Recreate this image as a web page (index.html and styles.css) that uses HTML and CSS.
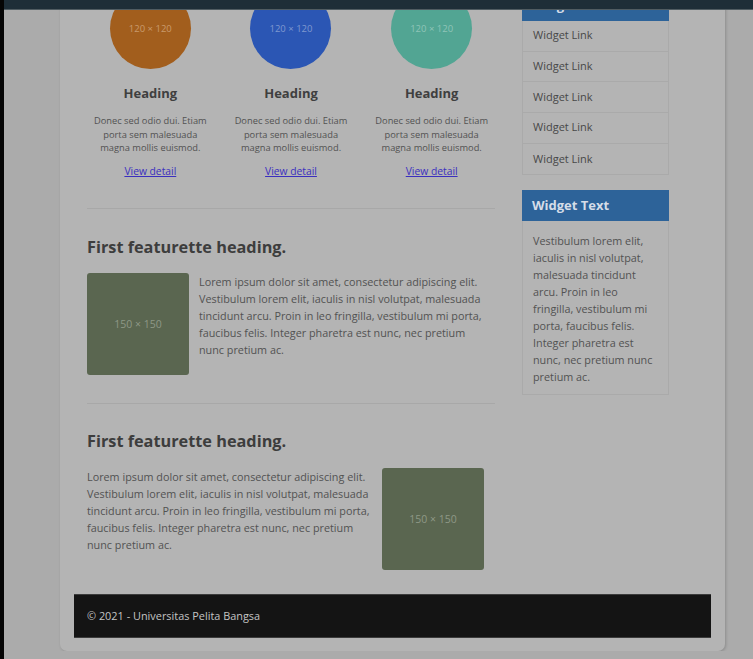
FILE: index.html
```html
<!DOCTYPE html>
<html lang="id">
<head>
<meta charset="utf-8">
<title>Universitas Pelita Bangsa</title>
<link rel="stylesheet" href="styles.css">
</head>
<body>
<div class="edge"></div>
<div class="topbar"></div>
<div class="page">
  <div class="card">
    <div class="content">
      <main class="main">
        <div class="cols">
          <div class="col">
            <div class="circle c-orange">120 × 120</div>
            <h3 class="col-title">Heading</h3>
            <p class="col-text">Donec sed odio dui. Etiam porta sem malesuada magna mollis euismod.</p>
            <a class="col-link" href="#">View detail</a>
          </div>
          <div class="col">
            <div class="circle c-blue">120 × 120</div>
            <h3 class="col-title">Heading</h3>
            <p class="col-text">Donec sed odio dui. Etiam porta sem malesuada magna mollis euismod.</p>
            <a class="col-link" href="#">View detail</a>
          </div>
          <div class="col">
            <div class="circle c-teal">120 × 120</div>
            <h3 class="col-title">Heading</h3>
            <p class="col-text">Donec sed odio dui. Etiam porta sem malesuada magna mollis euismod.</p>
            <a class="col-link" href="#">View detail</a>
          </div>
        </div>
        <hr class="rule rule-first">
        <section class="feat">
          <h2 class="feat-title">First featurette heading.</h2>
          <div class="feat-row">
            <div class="thumb">150 × 150</div>
            <p class="feat-text feat-text-right">Lorem ipsum dolor sit amet, consectetur adipiscing elit. Vestibulum lorem elit, iaculis in nisl volutpat, malesuada tincidunt arcu. Proin in leo fringilla, vestibulum mi porta, faucibus felis. Integer pharetra est nunc, nec pretium nunc pretium ac.</p>
          </div>
        </section>
        <hr class="rule">
        <section class="feat">
          <h2 class="feat-title">First featurette heading.</h2>
          <div class="feat-row feat-row-rev">
            <p class="feat-text feat-text-left">Lorem ipsum dolor sit amet, consectetur adipiscing elit. Vestibulum lorem elit, iaculis in nisl volutpat, malesuada tincidunt arcu. Proin in leo fringilla, vestibulum mi porta, faucibus felis. Integer pharetra est nunc, nec pretium nunc pretium ac.</p>
            <div class="thumb">150 × 150</div>
          </div>
        </section>
      </main>
      <aside class="sidebar">
        <div class="widget">
          <div class="widget-head">Widget Sidebar</div>
          <ul class="widget-list">
            <li><a href="#">Widget Link</a></li>
            <li><a href="#">Widget Link</a></li>
            <li><a href="#">Widget Link</a></li>
            <li><a href="#">Widget Link</a></li>
            <li><a href="#">Widget Link</a></li>
          </ul>
        </div>
        <div class="widget widget-second">
          <div class="widget-head">Widget Text</div>
          <p class="widget-body">Vestibulum lorem elit, iaculis in nisl volutpat, malesuada tincidunt arcu. Proin in leo fringilla, vestibulum mi porta, faucibus felis. Integer pharetra est nunc, nec pretium nunc pretium ac.</p>
        </div>
      </aside>
    </div>
    <footer class="footer">© 2021 - Universitas Pelita Bangsa</footer>
  </div>
</div>
</body>
</html>
```

FILE: styles.css
```css
* { box-sizing: border-box; }

html, body {
  margin: 0;
  padding: 0;
  background: #ababab;
  font-family: "Open Sans", "Noto Sans", "DejaVu Sans", sans-serif;
  color: #555555;
  overflow: hidden;
}

.edge {
  position: fixed;
  left: 0;
  top: 0;
  width: 4px;
  height: 100%;
  background: #050505;
  z-index: 5;
}

.topbar {
  position: fixed;
  left: 0;
  top: 0;
  width: 100%;
  height: 10px;
  background: #1e2e38;
  border-bottom: 1px solid #505c62;
  z-index: 4;
}

.page {
  padding: 0 28px 0 60px;
}

.card {
  width: 665px;
  margin-top: -40px;
  padding: 28px 14px 13px;
  background: #b4b4b4;
  border-radius: 0 0 7px 7px;
  box-shadow: 1px 1px 3px rgba(0, 0, 0, 0.18);
}

.content {
  display: flex;
  align-items: flex-start;
  padding: 0 0 0 13px;
}

.main {
  width: 408px;
  flex: none;
}

.cols {
  display: grid;
  grid-template-columns: repeat(3, 1fr);
  margin: 0 -7px;
}

.col {
  text-align: center;
}

.circle {
  width: 81px;
  height: 81px;
  margin: 0 auto;
  border-radius: 50%;
  display: flex;
  align-items: center;
  justify-content: center;
  font-size: 9.5px;
}

.c-orange { background: #a25e1d; color: #c99a6c; }
.c-blue { background: #2b56b4; color: #7f98cf; }
.c-teal { background: #52a593; color: #8fc4b7; }

.col-title {
  margin: 15px 0 0;
  font-size: 13px;
  line-height: 18px;
  font-weight: 700;
  color: #3f3f3f;
}

.col-text {
  margin: 12px auto 0;
  width: 120px;
  font-size: 9.3px;
  line-height: 13.5px;
  color: #525252;
}

.col-link {
  display: inline-block;
  margin-top: 9px;
  font-size: 10.3px;
  line-height: 14px;
  color: #3a2fbf;
  text-decoration: underline;
}

.rule {
  border: 0;
  border-top: 1px solid #a8a8a8;
  margin: 28px 0 0;
  height: 0;
}

.rule + .feat { padding-top: 27px; }

.feat + .rule { margin-top: 28px; }

.feat + .rule + .feat { padding-top: 26px; }

.feat-title {
  margin: 0;
  font-size: 16.3px;
  line-height: 22px;
  font-weight: 700;
  color: #3d3d3d;
}

.feat-row {
  display: flex;
  align-items: flex-start;
  gap: 10px;
  margin-top: 15px;
}

.feat-row-rev {
  margin-top: 16px;
  gap: 9px;
}

.thumb {
  width: 102px;
  height: 102px;
  flex: none;
  background: #5a6650;
  border-radius: 3px;
  color: #8e9886;
  font-size: 10.5px;
  display: flex;
  align-items: center;
  justify-content: center;
}

.feat-text {
  margin: 0;
  font-size: 10.8px;
  line-height: 17px;
  color: #525252;
}

.feat-text-right {
  width: 290px;
  flex: none;
}

.feat-text-left {
  width: 286px;
  flex: none;
}

.sidebar {
  width: 147px;
  flex: none;
  margin-left: 27px;
  margin-top: 2px;
}

.widget {
  border: 1px solid #aaaaaa;
}

.widget-second {
  margin-top: 15px;
}

.widget-head {
  background: #2d6399;
  color: #d5dde8;
  font-size: 13px;
  font-weight: 700;
  line-height: 31px;
  padding: 0 10px;
  margin: -1px -1px 0;
}

.widget-list {
  list-style: none;
  margin: 0;
  padding: 0;
}

.widget-list li {
  height: 30.7px;
  border-bottom: 1px solid #aaaaaa;
  display: flex;
  align-items: center;
  padding: 0 10px 2px;
}

.widget-list li:last-child { border-bottom: 0; }

.widget-list a {
  font-size: 11px;
  color: #484848;
  text-decoration: none;
}

.widget-body {
  margin: 0;
  padding: 11px 14px 9px 10px;
  font-size: 10.8px;
  line-height: 17px;
  color: #525252;
}

.footer {
  margin-top: 24px;
  height: 44px;
  background: #141414;
  border-top: 1px solid #3c3c3c;
  border-bottom: 1px solid #3c3c3c;
  color: #c4c4c4;
  font-size: 10.9px;
  line-height: 42px;
  padding: 0 13px;
}
```
